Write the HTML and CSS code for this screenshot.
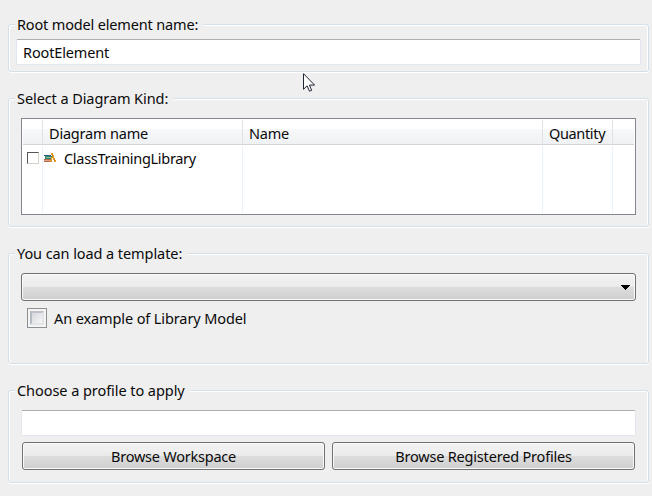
FILE: index.html
```html
<!DOCTYPE html>
<html lang="en">
<head>
<meta charset="utf-8">
<title>Model settings</title>
<link rel="stylesheet" href="styles.css">
</head>
<body>
<form class="page">
  <section class="group group-root">
    <h2 class="legend"><span class="t-root">Root model element name:</span></h2>
    <div class="field"><span class="t-element">RootElement</span></div>
  </section>
  <section class="group group-kind">
    <h2 class="legend"><span class="t-kind">Select a Diagram Kind:</span></h2>
    <div class="table">
      <div class="row head">
        <div class="cell"></div>
        <div class="cell"><span class="t-dname">Diagram name</span></div>
        <div class="cell"><span class="t-name">Name</span></div>
        <div class="cell"><span class="t-quantity">Quantity</span></div>
        <div class="cell"></div>
      </div>
      <div class="row body">
        <div class="cell"><span class="check-small"></span></div>
        <div class="cell item">
          <svg class="books" width="14" height="10" viewBox="0 0 14 10" shape-rendering="crispEdges">
            <path fill="#31577b" d="M1 2h7v1H1z"/>
            <path fill="#318b70" d="M2 3h7v3H2z"/>
            <path fill="#80b8a0" d="M3 4h5v1H3z"/>
            <path fill="#b9694a" d="M1 6h8v3H1z"/>
            <path fill="#dfa080" d="M1 7h8v1H1z"/>
            <path fill="#e9a020" d="M8 0h2v2h1v3h1v2h1v2h-2V7h-1V5H9v3H8v1H7V7h1V4h1V2H8z"/>
            <path fill="#b9781c" d="M9 2h1v2H9zM11 6h1v2h-1z"/>
          </svg>
          <span class="t-class">ClassTrainingLibrary</span>
        </div>
        <div class="cell"></div>
        <div class="cell"></div>
        <div class="cell"></div>
      </div>
    </div>
  </section>
  <section class="group group-template">
    <h2 class="legend"><span class="t-template">You can load a template:</span></h2>
    <div class="button combo">
      <svg width="9" height="5" viewBox="0 0 9 5" shape-rendering="crispEdges"><path d="M0 0h9v1H8v1H7v1H6v1H5v1H4V4H3V3H2V2H1V1H0z"/></svg>
    </div>
    <div class="option"><span class="check"><i></i></span><span class="t-example">An example of Library Model</span></div>
  </section>
  <section class="group group-profile">
    <h2 class="legend"><span class="t-profile">Choose a profile to apply</span></h2>
    <div class="field"></div>
    <div class="buttons">
      <div class="button"><span class="t-workspace">Browse Workspace</span></div>
      <div class="button"><span class="t-registered">Browse Registered Profiles</span></div>
    </div>
  </section>
</form>
<svg class="cursor" width="13" height="20" viewBox="0 0 13 20"><path d="M.5.7v15.6l3.6-3.5 2.4 5.4 2.2-.9-2.3-5.2h5.2z" fill="#fff" stroke="#202535" stroke-width="1"/></svg>
</body>
</html>
```
FILE: styles.css
```css
* { box-sizing: border-box; }
body {
  margin: 0;
  height: 496px;
  overflow: hidden;
  background: #efefef;
  color: #0a0a0a;
  font: 14.5px/20px "Noto Sans", "Open Sans", sans-serif;
}
span { white-space: nowrap; }
.page { padding: 24px 3px 0 8px; }
.group {
  border: 1px solid #d5dfe7;
  border-radius: 3px;
  box-shadow: inset 1px 1px #fff, inset -1px 0 #fff, 0 1px #fff;
  padding: 0 12px;
}
.group-root { height: 48px; padding: 0 7px; }
.group-kind { height: 129px; margin-top: 26px; }
.group-template { height: 111px; margin-top: 26px; }
.group-profile { height: 93px; margin-top: 26px; }
.legend {
  width: max-content;
  height: 20px;
  margin: -11px 0 0 -6px;
  padding: 0 5px 0 2px;
  background: #efefef;
  font: inherit;
}
.group-root .legend { margin-left: -1px; }
.field {
  height: 26px;
  margin-top: 5px;
  padding: 2px 6px;
  background: #fff;
  border: 1px solid #e2e6ee;
  border-top-color: #abadb3;
  border-radius: 2px;
}
.group-profile .field { margin-top: 10px; }
.table {
  height: 97px;
  margin-top: 10px;
  padding: 1px;
  background: #fff;
  border: 1px solid #828790;
}
.row {
  display: grid;
  grid-template-columns: 20px 200px 300px 70px 1fr;
}
.head {
  height: 25px;
  background: linear-gradient(#fff 0 9px, #f7f8fa 9px, #f0f1f3 24px);
  border-bottom: 1px solid #d5d5d5;
}
.body { height: 68px; padding-top: 1px; }
.cell { display: flex; align-items: flex-start; border-right: 1px solid #eaf2fb; }
.head .cell { border-color: #e0e2e5; padding: 3px 0 0 6px; }
.cell:last-child { border-right: 0; }
.body .cell:first-child { padding: 6px 0 0 4px; }
.check-small {
  width: 12px;
  height: 12px;
  border: 1px solid #d5d1c8;
  border-top-color: #555;
  border-left-color: #555;
}
.item { padding-top: 2px; }
.books { margin: 5px 7px 0 0; }
.button {
  display: flex;
  justify-content: center;
  height: 28px;
  padding-top: 3px;
  border: 1px solid #707070;
  border-radius: 3px;
  background: linear-gradient(#f3f3f3, #ebebeb 48%, #dddddd 49%, #cfcfcf);
  box-shadow: inset 0 0 0 1px #fafafa;
}
.combo { margin-top: 10px; padding: 11px 5px 0 0; justify-content: flex-end; }
.option { display: flex; align-items: flex-start; margin: 7px 0 0 6px; gap: 7px; }
.check {
  width: 20px;
  height: 20px;
  padding: 2px;
  background: #f4f4f4;
  border: 1px solid #8e8f8f;
}
.check i {
  display: block;
  width: 14px;
  height: 14px;
  border: 2px solid #cfd3d7;
  border-top-color: #bdc2c9;
  border-left-color: #b6bcc4;
  border-bottom-color: #e4e5e6;
  border-right-color: #e4e5e6;
  background: linear-gradient(135deg, #d5d8dc, #f6f6f6);
}
.buttons { display: grid; grid-template-columns: 1fr 1fr; gap: 7px; margin-top: 6px; padding: 0 1px; }
.cursor { position: absolute; left: 303px; top: 73px; }

/* Per-label tracking */
.t-root { letter-spacing: -.16px; }
.t-element { letter-spacing: -.14px; }
.t-kind { letter-spacing: -.08px; }
.t-dname { letter-spacing: -.2px; }
.t-name { letter-spacing: -.25px; }
.t-quantity { letter-spacing: -.35px; }
.t-class { letter-spacing: -.3px; }
.t-template { letter-spacing: -.08px; }
.t-example { letter-spacing: -.11px; }
.t-profile { letter-spacing: -.06px; }
.t-workspace { letter-spacing: -.24px; }
.t-registered { letter-spacing: -.19px; }
```
